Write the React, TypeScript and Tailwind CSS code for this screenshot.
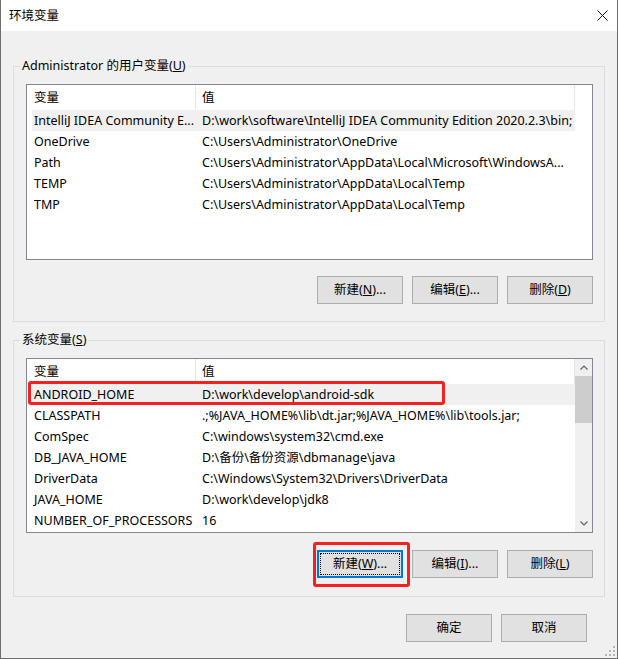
import React from 'react'

type Row = [string, string]

const userRows: Row[] = [
  ['IntelliJ IDEA Community E...', 'D:\\work\\software\\IntelliJ IDEA Community Edition 2020.2.3\\bin;'],
  ['OneDrive', 'C:\\Users\\Administrator\\OneDrive'],
  ['Path', 'C:\\Users\\Administrator\\AppData\\Local\\Microsoft\\WindowsA...'],
  ['TEMP', 'C:\\Users\\Administrator\\AppData\\Local\\Temp'],
  ['TMP', 'C:\\Users\\Administrator\\AppData\\Local\\Temp'],
]

const sysRows: Row[] = [
  ['ANDROID_HOME', 'D:\\work\\develop\\android-sdk'],
  ['CLASSPATH', '.;%JAVA_HOME%\\lib\\dt.jar;%JAVA_HOME%\\lib\\tools.jar;'],
  ['ComSpec', 'C:\\windows\\system32\\cmd.exe'],
  ['DB_JAVA_HOME', 'D:\\备份\\备份资源\\dbmanage\\java'],
  ['DriverData', 'C:\\Windows\\System32\\Drivers\\DriverData'],
  ['JAVA_HOME', 'D:\\work\\develop\\jdk8'],
  ['NUMBER_OF_PROCESSORS', '16'],
]

function Chevron({ down }: { down?: boolean }) {
  return (
    <svg width="8" height="5" viewBox="0 0 8 5" className={down ? 'rotate-180' : ''}>
      <polyline points="0.5,4.5 4,1 7.5,4.5" fill="none" stroke="#606060" strokeWidth="1.2" />
    </svg>
  )
}

function ListView({ rows, height, scroll }: { rows: Row[]; height: string; scroll?: boolean }) {
  return (
    <div className={`${height} flex overflow-hidden border border-[#828790] bg-white`}>
      <div className="flex w-[548px] flex-col">
        {/* header */}
        <div className="flex h-[25px] shrink-0">
          <div className="flex w-[169px] items-center border-r border-[#e5e5e5] pl-[7px]">变量</div>
          <div className="flex w-[379px] items-center border-r border-[#e5e5e5] pl-[6px]">值</div>
        </div>
        {rows.map(([name, value], i) => (
          <div key={name} className="flex h-[21px] shrink-0 pl-[5px]">
            <div className={`flex flex-1 items-center ${i === 0 ? 'bg-[#f0f0f0]' : ''}`}>
              <div className="w-[164px] overflow-hidden whitespace-nowrap pl-[2px]">{name}</div>
              <div className="flex-1 overflow-hidden whitespace-nowrap pl-[6px]">{value}</div>
            </div>
          </div>
        ))}
      </div>
      {scroll ? (
        <div className="flex w-[17px] flex-col bg-[#f0f0f0]">
          <div className="flex h-[17px] items-center justify-center">
            <Chevron />
          </div>
          <div className="h-[47px] bg-[#cdcdcd]" />
          <div className="flex-1" />
          <div className="flex h-[17px] items-center justify-center">
            <Chevron down />
          </div>
        </div>
      ) : (
        <div className="flex-1" />
      )}
    </div>
  )
}

function Btn({ children, focused }: { children: React.ReactNode; focused?: boolean }) {
  return (
    <div
      className={`relative flex h-[28px] w-[86px] items-center justify-center bg-[#e1e1e1] ${
        focused ? 'border-2 border-[#0078d7]' : 'border border-[#adadad]'
      }`}
    >
      {focused && <div className="absolute inset-[1px] border border-dotted border-black" />}
      <span>{children}</span>
    </div>
  )
}

export default function App() {
  return (
    <div className="relative h-[659px] w-[618px] border-x border-b border-[#6e6e6e] bg-[#f0f0f0] font-['Noto_Sans','Noto_Sans_CJK_SC',sans-serif] text-[12.5px] leading-[16px] text-black">
      {/* Title bar */}
      <div className="flex h-[31px] items-center justify-between bg-white pl-[8px] pr-[9px]">
        <span>环境变量</span>
        <svg width="11" height="11" viewBox="0 0 11 11">
          <path d="M0.5 0.5 L10.5 10.5 M10.5 0.5 L0.5 10.5" stroke="#111" strokeWidth="1" />
        </svg>
      </div>

      <div className="flex flex-col px-[12px] pt-[27px]">
        {/* User variables */}
        <fieldset className="border border-[#dcdcdc]">
          <legend className="ml-[6px] px-[2px] leading-[16px]">
            Administrator 的用户变量(<u>U</u>)
          </legend>
          <div className="flex flex-col pl-[12px] pr-[11px] pt-[10px] pb-[17px]">
            <ListView rows={userRows} height="h-[176px]" />
            <div className="mt-[16px] flex justify-end gap-[9px]">
              <Btn>
                新建(<u>N</u>)...
              </Btn>
              <Btn>
                编辑(<u>E</u>)...
              </Btn>
              <Btn>
                删除(<u>D</u>)
              </Btn>
            </div>
          </div>
        </fieldset>

        {/* System variables */}
        <fieldset className="mt-[10px] border border-[#dcdcdc]">
          <legend className="ml-[6px] px-[2px] leading-[16px]">
            系统变量(<u>S</u>)
          </legend>
          <div className="flex flex-col pl-[12px] pr-[11px] pt-[10px] pb-[18px]">
            <ListView rows={sysRows} height="h-[175px]" scroll />
            <div className="mt-[17px] flex justify-end gap-[9px]">
              <Btn focused>
                新建(<u>W</u>)...
              </Btn>
              <Btn>
                编辑(<u>I</u>)...
              </Btn>
              <Btn>
                删除(<u>L</u>)
              </Btn>
            </div>
          </div>
        </fieldset>

        <div className="mt-[17px] flex justify-end gap-[9px] pr-[18px]">
          <Btn>确定</Btn>
          <Btn>取消</Btn>
        </div>
      </div>

      {/* Resize grip */}
      <svg className="absolute bottom-[1px] right-[1px]" width="12" height="12" viewBox="0 0 12 12">
        {[
          [9, 1],
          [9, 5],
          [5, 5],
          [9, 9],
          [5, 9],
          [1, 9],
        ].map(([x, y]) => (
          <rect key={`${x}-${y}`} x={x} y={y} width="2" height="2" fill="#b4b4b4" />
        ))}
      </svg>

      {/* Red annotation boxes */}
      <div className="absolute left-[27px] top-[381px] h-[24px] w-[417px] rounded-[3px] border-[3px] border-[#f5201f]" />
      <div className="absolute left-[312px] top-[542px] h-[45px] w-[97px] rounded-[3px] border-[3px] border-[#f5201f]" />
    </div>
  )
}
